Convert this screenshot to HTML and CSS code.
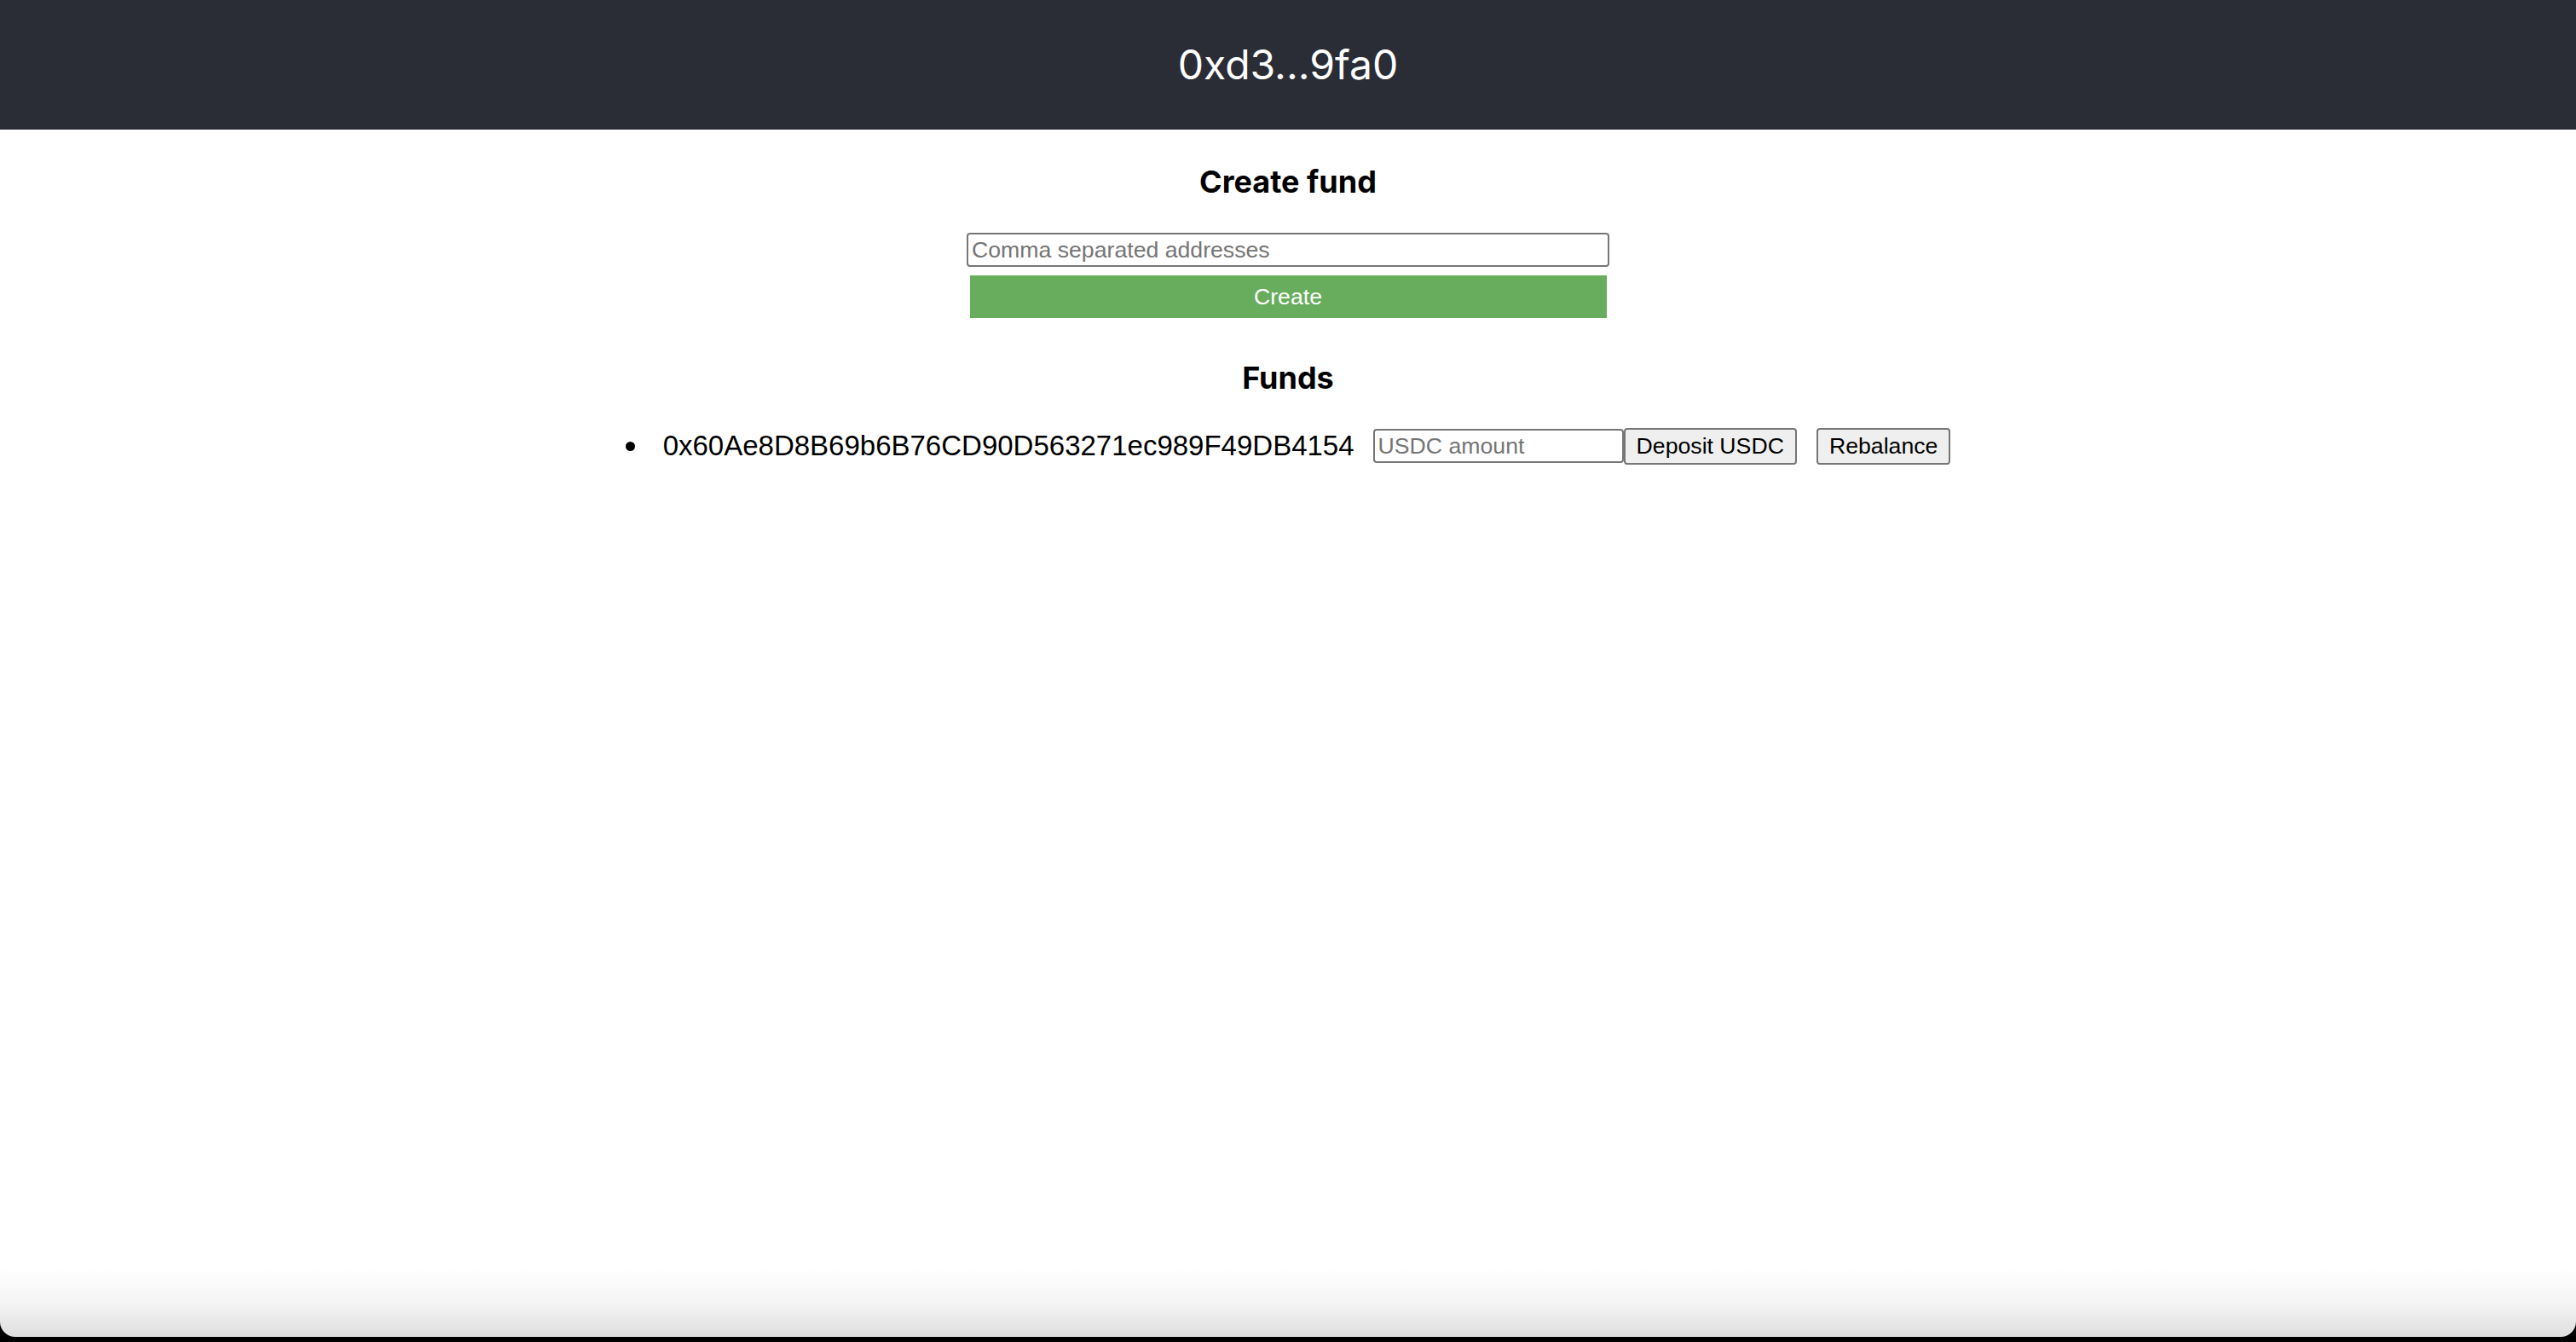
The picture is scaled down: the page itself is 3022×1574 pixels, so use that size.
FILE: index.html
```html
<!DOCTYPE html>
<html lang="en">
<head>
<meta charset="utf-8">
<title>Funds</title>
<link rel="stylesheet" href="styles.css">
</head>
<body>
<div class="window">
  <header class="app-header">
    <span class="account">0xd3...9fa0</span>
  </header>
  <main class="content">
    <section class="create">
      <h3 class="section-title first">Create fund</h3>
      <input class="addresses" type="text" placeholder="Comma separated addresses">
      <button class="create-btn" type="button">Create</button>
    </section>
    <section class="funds">
      <h3 class="section-title second">Funds</h3>
      <ul class="fund-list">
        <li class="fund">
          <span class="fund-address">0x60Ae8D8B69b6B76CD90D563271ec989F49DB4154</span>
          <input class="amount" type="text" placeholder="USDC amount">
          <button class="btn deposit" type="button">Deposit USDC</button>
          <button class="btn rebalance" type="button">Rebalance</button>
        </li>
      </ul>
    </section>
  </main>
</div>
</body>
</html>
```

FILE: styles.css
```css
html {
  background: #000;
}

body {
  margin: 0;
  font-family: "Liberation Sans", Arial, sans-serif;
  color: #000;
}

.window {
  min-height: calc(100vh - 6px);
  box-sizing: border-box;
  background: linear-gradient(to bottom, #ffffff 0, #ffffff calc(100% - 80px), #f4f4f4 calc(100% - 40px), #dedede 100%);
  border-radius: 0 0 18px 18px;
  overflow: hidden;
  display: flex;
  flex-direction: column;
}

.app-header {
  height: 152px;
  background: #2a2d35;
  display: flex;
  align-items: center;
  justify-content: center;
}

.account {
  font-family: Inter, "Noto Sans", sans-serif;
  font-weight: 400;
  font-size: 48px;
  color: #fff;
  line-height: 1;
}

.content {
  display: flex;
  flex-direction: column;
  align-items: center;
}

.create {
  display: flex;
  flex-direction: column;
  align-items: center;
}

.section-title {
  font-family: Inter, "Noto Sans", sans-serif;
  font-weight: 700;
  font-size: 36px;
  line-height: 44px;
  margin: 0;
  text-align: center;
}

.section-title.first {
  margin: 39px 0 38px;
}

.section-title.second {
  margin: 48px 0 36px;
}

.addresses {
  box-sizing: border-box;
  width: 754px;
  height: 40px;
  margin: 0;
  padding: 0 4px;
  border: 2px solid #767676;
  border-radius: 4px;
  font-family: "Liberation Sans", Arial, sans-serif;
  font-size: 26.67px;
  color: #000;
  background: #fff;
}

.addresses::placeholder,
.amount::placeholder {
  color: #757575;
}

.create-btn {
  box-sizing: border-box;
  width: 747px;
  height: 50px;
  margin: 10px 0 0;
  border: none;
  background: #68ad5d;
  color: #fff;
  font-family: "Liberation Sans", Arial, sans-serif;
  font-size: 26.67px;
  padding: 0;
}

.funds {
  display: flex;
  flex-direction: column;
  align-items: center;
  width: 100%;
}

.fund-list {
  list-style: none;
  margin: 0;
  padding: 0;
  width: 100%;
}

.fund {
  display: flex;
  align-items: center;
  justify-content: center;
  height: 44px;
}

.fund::before {
  content: "";
  width: 11px;
  height: 11px;
  border-radius: 50%;
  background: #000;
  margin-right: 33px;
}

.fund-address {
  font-family: "Liberation Sans", Arial, sans-serif;
  font-size: 33px;
  line-height: 40px;
  margin-right: 22px;
}

.amount {
  box-sizing: border-box;
  width: 294px;
  height: 40px;
  margin: 0;
  padding: 0 4px;
  border: 2px solid #767676;
  border-radius: 4px;
  font-family: "Liberation Sans", Arial, sans-serif;
  font-size: 26.67px;
  background: #fff;
}

.btn {
  box-sizing: border-box;
  height: 43px;
  margin: 0;
  padding: 0 13px;
  border: 2px solid #767676;
  border-radius: 4px;
  background: #efefef;
  color: #000;
  font-family: "Liberation Sans", Arial, sans-serif;
  font-size: 26.67px;
}

.rebalance {
  margin-left: 23px;
}
```
